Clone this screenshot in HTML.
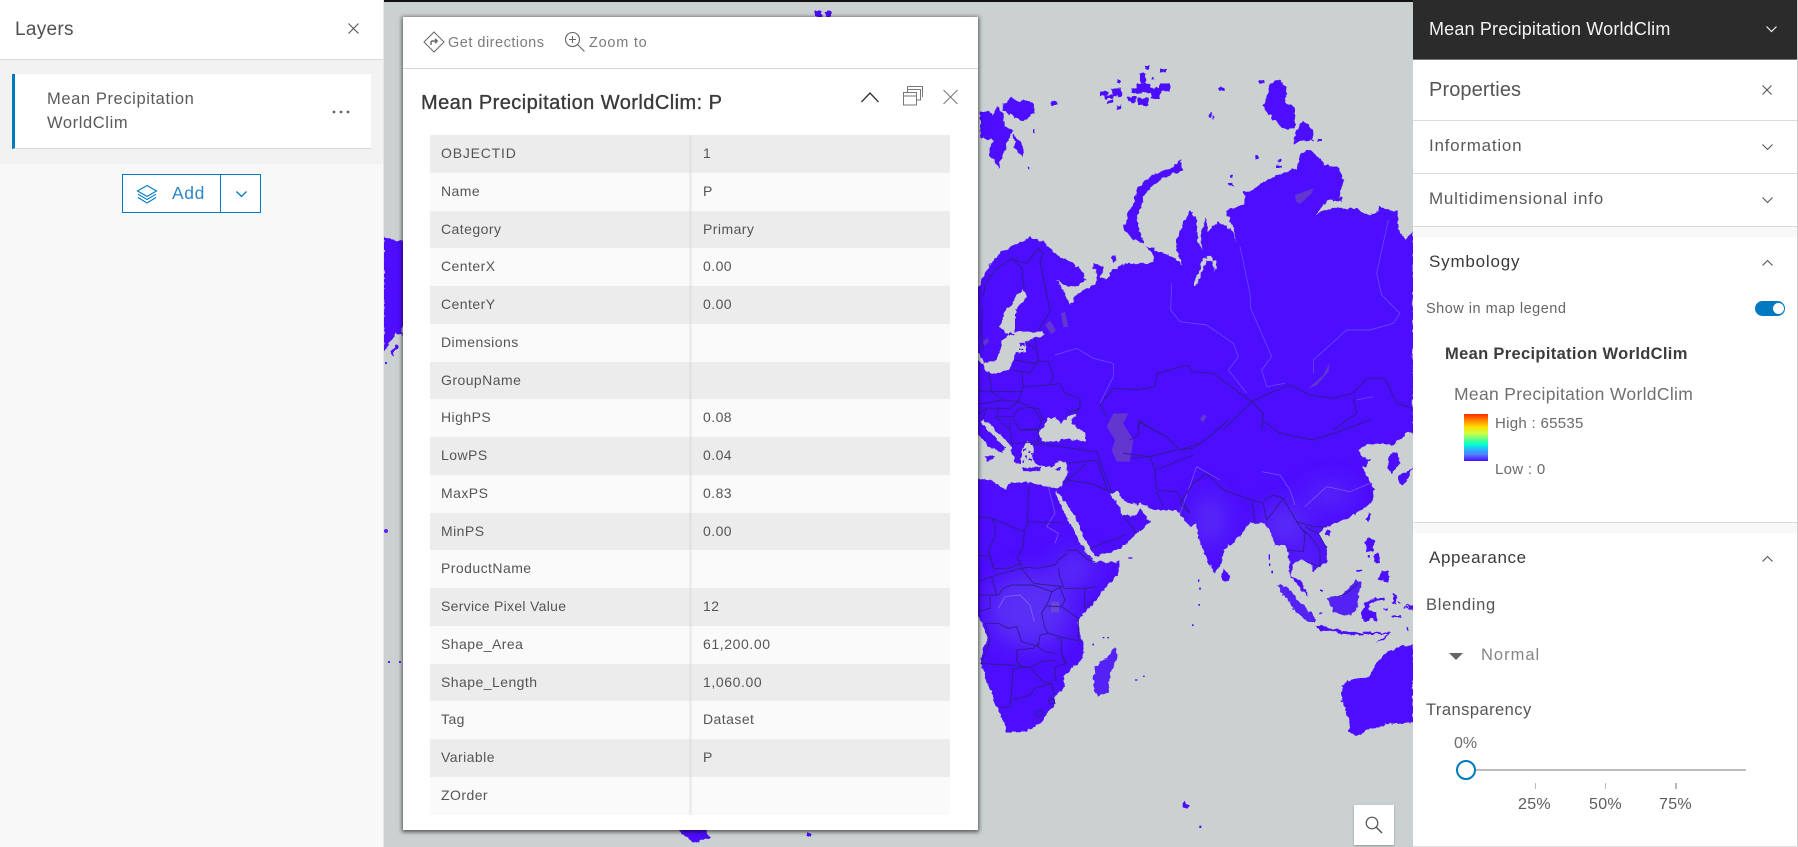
<!DOCTYPE html>
<html lang="en">
<head>
<meta charset="utf-8">
<title>Mean Precipitation WorldClim</title>
<style>
html,body{margin:0;padding:0;width:1798px;height:847px;overflow:hidden;background:#fff;font-family:"Liberation Sans",sans-serif;color:#4c4c4c}
div,span,svg{position:absolute;display:block}
.t{white-space:nowrap;line-height:20px;height:20px}
.row{left:0;width:520px;height:37.78px;position:relative}
.row span{top:8px;font-size:14px;line-height:20px;white-space:nowrap;letter-spacing:.45px;color:#555}
.row .l{left:11px}.row .v{left:273px}
.row i{position:absolute;left:259px;width:3px;top:0;bottom:0}
.o{background:#ececec}.o i{background:#e3e3e3}
.e{background:#fafafa}.e i{background:#ededed}
</style>
</head>
<body>
<!-- MAP -->
<div style="left:384px;top:0;width:1029px;height:847px;background:#cbd1d1"></div>
<svg width="1798" height="847" viewBox="0 0 1798 847" style="left:0;top:0">
<defs>
<clipPath id="mapc"><rect x="384" y="2" width="1029" height="845"/></clipPath>
<polygon id="z7land" points="-100,-5 1300,-5 1299,35 1285,35 1240,75 1210,70 1170,72 1135,90 1150,110 1172,120 1150,145 1175,195 1185,210 1170,250 1130,280 1100,295 1060,310 1040,320 1015,340 1040,385 1042,420 1000,455 990,430 965,420 940,430 935,470 960,480 985,530 955,500 930,465 925,400 915,375 885,375 870,330 855,310 810,310 770,360 730,390 725,430 705,462 680,420 655,350 650,310 630,318 605,290 590,270 520,270 480,250 470,255 430,240 410,210 390,220 410,250 430,285 470,285 480,265 510,305 470,340 435,375 400,395 345,408 315,360 290,300 245,230 228,212 225,220 265,300 295,360 340,425 420,425 415,460 380,500 330,560 295,600 300,640 310,670 310,715 250,770 255,800 225,830 225,850 180,910 135,935 85,940 70,900 40,840 3,730 7,695 20,660 20,640 -5,590 -100,590"/>
<clipPath id="landc"><use href="#z7land" transform="translate(980,420) scale(.33333)"/></clipPath>
<filter id="bl" x="-50%" y="-50%" width="200%" height="200%"><feGaussianBlur stdDeviation="12"/></filter>
<filter id="rough" filterUnits="userSpaceOnUse" x="384" y="0" width="1029" height="847">
<feTurbulence type="fractalNoise" baseFrequency=".2" numOctaves="2" seed="4" result="n"/>
<feDisplacementMap in="SourceGraphic" in2="n" scale="5" xChannelSelector="R" yChannelSelector="G"/>
</filter>
</defs>
<g clip-path="url(#mapc)">
<g filter="url(#rough)">
<!-- strip left of the popup and tiny fragments -->
<g fill="#4e0cfe">
<path d="M384 237L390 238L396 241L401 240L403 244L408 244L408 315L403 325L402 335L396 333L392 340L384 352Z"/>
<path d="M390 352L395 345L398 347L392 356Z"/>
<path d="M678 828L705 828L710 838L700 840L697 843L686 838Z"/>
<rect x="808" y="833" width="3" height="4"/>
<path d="M815 11L822 11L822 17L815 17ZM826 11L831 11L831 17L826 17Z"/>
</g>

<!-- north Eurasia, zoom-6 coordinates -->
<g transform="translate(980,0) scale(.33333)" fill="#4e0cfe">
<polygon points="0,860 10,830 30,790 60,760 90,740 150,712 190,725 210,745 240,770 280,790 310,815 315,840 290,860 250,855 230,840 250,870 270,915 285,890 310,870 345,855 352,825 338,790 370,800 362,835 385,835 395,810 440,790 505,790 520,785 520,770 500,740 540,755 580,770 610,797 590,755 590,715 610,670 630,630 650,655 652,715 668,760 660,810 640,855 650,855 670,805 680,780 700,785 705,815 708,785 690,770 665,775 665,700 678,650 684,695 715,665 760,695 768,730 760,680 735,630 790,615 795,590 790,575 815,570 860,540 920,515 950,505 960,465 990,450 1020,475 1030,495 1075,500 1090,540 1080,590 1045,600 1010,640 1060,625 1130,625 1165,645 1190,640 1195,620 1250,635 1258,700 1280,720 1299,690 1300,1300 -100,1300 -100,860"/>
<polygon points="0,335 25,330 40,345 50,320 70,340 75,380 100,390 85,420 75,450 55,505 45,480 25,465 30,440 40,420 5,415 0,390"/>
<polygon points="100,400 130,440 125,470 105,440"/>
<polygon points="70,310 95,290 110,305 130,300 160,310 165,335 130,365 90,345 70,330"/>
<polygon points="600,480 610,510 570,525 530,545 490,590 470,660 490,730 455,715 430,690 440,650 460,610 475,560 520,525 570,505"/>
<polygon points="870,250 900,240 920,270 915,310 945,320 945,385 910,385 880,360 850,320 860,290"/>
<polygon points="960,370 975,365 1000,390 1000,420 955,425 940,435 945,405"/>
<polygon points="392,770 405,765 410,780 398,787"/>
<rect x="360" y="275" width="25" height="12"/><rect x="375" y="285" width="25" height="12"/><rect x="395" y="265" width="30" height="25"/><rect x="385" y="300" width="12" height="10"/><rect x="410" y="315" width="12" height="12"/><rect x="455" y="265" width="30" height="15"/><rect x="480" y="220" width="18" height="30"/><rect x="470" y="250" width="40" height="30"/><rect x="440" y="290" width="30" height="15"/><rect x="475" y="295" width="30" height="20"/><rect x="510" y="265" width="30" height="30"/><rect x="540" y="250" width="30" height="25"/><rect x="495" y="195" width="15" height="12"/><rect x="540" y="207" width="18" height="10"/><rect x="412" y="240" width="8" height="12"/><rect x="515" y="230" width="8" height="10"/><rect x="458" y="290" width="8" height="15"/><rect x="215" y="305" width="15" height="10"/><rect x="716" y="262" width="18" height="12"/><rect x="838" y="241" width="16" height="10"/><rect x="888" y="496" width="18" height="8"/><rect x="895" y="478" width="8" height="12"/><rect x="745" y="548" width="12" height="10"/><rect x="752" y="526" width="8" height="8"/><rect x="826" y="465" width="10" height="12"/><rect x="1012" y="416" width="14" height="10"/><rect x="1060" y="592" width="25" height="12"/><rect x="688" y="340" width="6" height="10"/><rect x="697" y="350" width="6" height="6"/><rect x="157" y="385" width="6" height="16"/><rect x="142" y="497" width="6" height="12"/>
</g>

<!-- south Asia + Africa, zoom-7 coordinates -->
<g transform="translate(980,420) scale(.33333)" fill="#4e0cfe">
<use href="#z7land"/>
<polygon fill="#5522f6" points="405,682 412,715 390,760 385,815 355,830 338,800 345,740 385,710"/>
<polygon points="730,445 750,470 745,485 730,482 727,460"/>
<polygon fill="#5522f6" points="892,492 920,500 960,545 1005,590 1005,608 975,600 945,570 915,530"/>
<polygon points="1005,615 1080,630 1150,640 1150,648 1080,640 1010,628"/>
<polygon points="1150,635 1230,638 1232,642 1150,642"/>
<polygon points="1188,668 1230,640 1212,660"/>
<polygon fill="#5522f6" points="1040,535 1085,525 1115,495 1130,475 1145,490 1135,525 1130,570 1100,590 1060,575"/>
<polygon points="1155,545 1210,530 1210,540 1168,550 1165,570 1185,575 1190,605 1175,595 1160,605 1145,600 1148,570"/>
<polygon points="1155,365 1170,350 1183,360 1178,395 1160,395"/>
<polygon points="1205,450 1225,455 1225,485 1195,480"/>
<polygon points="1165,275 1175,280 1168,305 1158,300"/>
<polygon points="1040,325 1055,335 1045,350 1035,345"/>
<polygon points="1225,110 1250,95 1260,130 1235,160 1225,150"/>
<polygon points="1299,140 1290,165 1270,195 1255,185 1260,165 1285,155"/>
<polygon points="1300,675 1265,680 1215,700 1185,735 1170,770 1120,775 1088,795 1085,840 1110,905 1105,935 1130,950 1170,925 1225,912 1300,908"/>
<polygon points="1280,553 1300,558 1300,572 1285,568"/>
<polygon points="1180,405 1195,400 1200,425 1185,430"/>
<polygon points="1240,520 1250,525 1250,555 1238,550"/>
<rect x="1210" y="565" width="12" height="5"/><rect x="1240" y="585" width="24" height="6"/><rect x="1280" y="620" width="6" height="12"/><rect x="1205" y="532" width="10" height="8"/><rect x="1165" y="405" width="6" height="6"/><rect x="1130" y="450" width="12" height="5"/><rect x="1020" y="510" width="6" height="6"/><rect x="1272" y="560" width="9" height="5"/><rect x="1255" y="545" width="6" height="5"/>
<rect x="1018" y="578" width="10" height="5"/><rect x="935" y="565" width="5" height="5"/>
</g>

<!-- seas, zoom-9 coordinates -->
<g transform="translate(895,200) scale(.33333)" fill="#cbd1d1">
<polygon points="380,268 400,285 360,330 360,395 440,395 450,405 420,415 390,425 395,455 360,460 355,490 340,510 290,520 270,510 265,490 300,485 320,440 320,420 340,405 315,380 325,340 345,320 360,295"/>
<polygon points="245,458 255,460 268,490 252,490 245,480"/>
<polygon points="430,700 445,680 460,650 480,655 495,670 520,650 545,640 530,665 545,680 575,705 570,725 520,715 480,725 440,725"/>
<polygon points="240,705 250,705 278,735 305,750 322,760 330,745 320,730 295,710 275,690 262,672 262,660 278,665 300,690 325,712 345,735 350,765 365,790 378,790 378,750 395,728 415,735 410,775 430,797 470,802 490,785 515,788 515,825 500,858 470,862 440,855 395,848 345,845 330,868 310,855 290,840 240,835"/>
<g fill="#4e0cfe">
<polygon points="265,770 285,768 300,772 280,782"/>
<polygon points="380,805 435,803 435,812 385,812"/>
<polygon points="478,808 497,800 495,812"/>
<rect x="385" y="745" width="7" height="7"/><rect x="398" y="752" width="7" height="7"/><rect x="390" y="768" width="7" height="7"/><rect x="402" y="775" width="6" height="6"/><rect x="382" y="782" width="5" height="5"/><rect x="408" y="760" width="4" height="5"/>
<rect x="362" y="772" width="6" height="6"/><rect x="375" y="430" width="14" height="8"/><rect x="340" y="400" width="18" height="6"/>
<rect x="372" y="445" width="10" height="5"/>
</g>
</g>
</g>

<!-- unfiltered tiny dots -->
<g fill="#5a20f5">
<circle cx="386" cy="531" r="2"/>
<rect x="388" y="661" width="2" height="2"/><rect x="399" y="661" width="2" height="2"/>
<rect x="385" y="362" width="2" height="2"/>
</g>
<g transform="translate(980,420) scale(.33333)" fill="#4e0cfe">
<polygon points="608,1150 614,1142 618,1152 630,1156 622,1166 608,1162"/>
<rect x="658" y="1217" width="6" height="7"/>
<rect x="465" y="778" width="7" height="4"/><rect x="489" y="767" width="5" height="4"/>
<rect x="654" y="478" width="4" height="8"/><rect x="658" y="502" width="4" height="8"/><rect x="655" y="552" width="5" height="5"/><rect x="636" y="613" width="5" height="5"/>
<rect x="866" y="403" width="4" height="16"/><rect x="867" y="430" width="4" height="8"/><rect x="874" y="452" width="5" height="8"/>
<rect x="368" y="651" width="5" height="4"/><rect x="382" y="651" width="5" height="4"/><rect x="337" y="671" width="5" height="5"/>
<rect x="445" y="412" width="12" height="4"/>
</g>

<!-- soft lighter shading, clipped to land -->
<g clip-path="url(#landc)">
<g opacity=".75" filter="url(#bl)" fill="#5e3af2">
<ellipse cx="1030" cy="610" rx="42" ry="38"/>
<ellipse cx="1075" cy="568" rx="20" ry="16"/>
<ellipse cx="1285" cy="525" rx="22" ry="20"/>
<ellipse cx="1210" cy="520" rx="14" ry="26"/>
<ellipse cx="1330" cy="495" rx="24" ry="10"/>
<ellipse cx="1310" cy="560" rx="10" ry="14"/>
</g>
</g>

<!-- lakes -->
<g transform="translate(980,0) scale(.33333)" fill="#6236cf">
<polygon points="945,585 1000,565 995,580 960,612 948,605"/>
<polygon points="985,1165 1030,1125 1050,1087 1045,1115 1010,1155"/>
<polygon points="660,1255 672,1243 680,1250 668,1268"/>
</g>
<g transform="translate(980,420) scale(.33333)" fill="#6236cf">
<polygon points="380,20 400,-20 445,-20 430,10 460,60 450,125 410,125 395,90 405,60"/>
</g>
<g transform="translate(895,200) scale(.33333)" fill="#6236cf">
<polygon points="450,375 465,362 483,390 470,403"/>
<polygon points="498,340 510,335 520,380 505,382"/>
<polygon points="263,425 278,414 282,425 268,437"/>
</g>
<g transform="translate(895,480) scale(.33333)" fill="#6a46d8">
<rect x="468" y="365" width="24" height="32"/>
</g>

<!-- rivers -->
<g transform="translate(980,0) scale(.33333)" fill="none" stroke="#7255f2" stroke-width="2">
<path d="M575,850L572,930L600,965L680,975L760,1030L775,1070L745,1110L800,1180"/>
<path d="M780,740L810,880L812,925L875,1070L845,1110L860,1160L915,1150"/>
<path d="M1225,660L1190,820L1205,885L1260,940L1240,970L1170,990L1100,990L1000,1080L1000,1120"/>
<path d="M225,1065L290,1045L340,1075L400,1090L400,1130L360,1210"/>
<path d="M1130,1200L1180,1190"/>
</g>
<g transform="translate(980,420) scale(.33333)" fill="none" stroke="#7a60f2" stroke-width="2">
<path d="M205,200L225,280L200,320L235,340L225,370"/>
<path d="M845,155L900,165L930,210L945,255"/>
<path d="M975,260L1040,200L1110,215L1170,190"/>
<path d="M600,280L650,140L720,180"/>
</g>
<g transform="translate(895,480) scale(.33333)" fill="none" stroke="#8a72f0" stroke-width="2">
<path d="M310,385L330,350L375,345L405,375L418,425"/>
</g>

<!-- borders -->
<g transform="translate(980,0) scale(.33333)" fill="none" stroke="#2f1c90" stroke-width="2.8">
<path d="M380,1190L400,1165L470,1170L525,1160L530,1120L625,1095L635,1115L700,1120L780,1180L815,1205L880,1175L930,1155L990,1185L1060,1195L1120,1180L1160,1135L1215,1135L1250,1210L1299,1225"/>
<path d="M815,1205L850,1240L845,1290"/>
<path d="M380,1190L360,1215L380,1250"/>
<path d="M730,1290L780,1240L815,1205"/>
<path d="M1060,1290L1130,1240L1120,1190"/>
<path d="M475,1290L480,1262L520,1290"/>
</g>
<g transform="translate(895,200) scale(.33333)" fill="none" stroke="#2f1c90" stroke-width="2.8">
<path d="M265,290L270,255L300,210L350,175L380,205L388,268"/>
<path d="M350,175L370,185L395,190L430,145L445,160L435,185L455,280L465,335L430,390"/>
<path d="M262,320L260,400L265,450"/>
<path d="M420,415L430,480"/>
<path d="M390,425L420,445M360,480L415,490L430,483L460,485L475,530L465,550"/>
<path d="M282,520L290,575L380,575L385,560L380,515L355,510"/>
<path d="M380,515L405,518L430,483"/>
<path d="M385,560L465,555L495,550L510,580L555,595L555,625L515,640"/>
<path d="M385,560L370,605L415,625L430,625L445,660"/>
<path d="M250,570L262,575L290,575L325,600L270,610L250,610"/>
<path d="M270,610L325,600L370,605L345,625L310,625L275,625"/>
<path d="M310,625L305,650L355,650L370,625"/>
<path d="M370,625L415,622L440,665L430,685L375,690L355,655"/>
<path d="M375,690L430,690L430,725L375,730"/>
<path d="M300,650L345,690L350,730L375,730M345,660L345,690"/>
<path d="M415,735L440,730"/>
<path d="M250,640L275,625L262,660"/>
<path d="M555,625L540,640"/>
</g>
<g transform="translate(980,420) scale(.33333)" fill="none" stroke="#2f1c90" stroke-width="2.8">
<path d="M262,130L350,120L385,215"/>
<path d="M250,190L262,180L320,130M262,180L330,190L390,215"/>
<path d="M350,90L360,125L395,215"/>
<path d="M175,70L345,95"/>
<path d="M430,100L510,110L525,150L530,210L590,215L630,280"/>
<path d="M530,215L550,260"/>
<path d="M630,280L600,250L640,190L680,160"/>
<path d="M680,160L730,210L815,240"/>
<path d="M815,240L825,305M860,300L850,250L815,240"/>
<path d="M860,300L910,235L880,225L850,240"/>
<path d="M910,235L950,305L1000,320L1040,320"/>
<path d="M950,305L975,340L970,395L925,390"/>
<path d="M970,330L1000,360L1020,390L1020,440L990,430"/>
<path d="M975,320L1015,340L1040,385"/>
<path d="M450,60L475,45L475,5"/>
<path d="M475,5L560,50L600,90L640,85L700,40L745,0"/>
<path d="M845,0L900,40L1000,60L1090,30L1170,0"/>
<path d="M450,115L510,110L590,90M600,90L660,70L700,40"/>
<path d="M510,110L525,150L590,125L640,105"/>
<path d="M430,285L470,340M330,385L435,345"/>
<path d="M1075,530L1100,520L1135,490"/>
</g>
<g transform="translate(895,480) scale(.33333)" fill="none" stroke="#2f1c90" stroke-width="2.8">
<path d="M400,20L398,125L500,128"/>
<path d="M400,125L385,155L290,115L250,110"/>
<path d="M388,152L385,200L368,230L380,265"/>
<path d="M300,130L300,170L280,210L295,260"/>
<path d="M295,265L340,265L380,250"/>
<path d="M380,265L395,262L430,265L480,255L490,240L515,220"/>
<path d="M290,290L340,275L380,265L415,310L505,320L495,290L490,265"/>
<path d="M515,212L545,210L580,240L600,245"/>
<path d="M505,325L535,325L570,325L600,320"/>
<path d="M325,325L350,315L415,315L470,335L460,365L440,400L450,445L460,460L435,465L430,500L380,485L365,440L340,445L310,430L270,430"/>
<path d="M455,378L500,380L550,415L550,480"/>
<path d="M470,335L495,322L510,360L500,380"/>
<path d="M570,325L568,385L600,355"/>
<path d="M460,460L495,470L560,485"/>
<path d="M270,430L285,480L275,510L258,550L360,556L405,562L440,545L480,540"/>
<path d="M365,510L365,545L385,560"/>
<path d="M365,510L415,505L430,490M430,500L450,515L480,520"/>
<path d="M500,520L515,550L480,560L483,605"/>
<path d="M470,610L480,650"/>
<path d="M355,565L345,680L310,685"/>
<path d="M355,565L405,562L445,605L470,610L420,625L405,645L350,660"/>
<path d="M420,700L435,688L445,700L430,712Z"/>
<path d="M460,660L475,655L480,670L465,672Z"/>
<path d="M485,475L498,475L500,520L510,550"/>
<path d="M250,395L285,385L285,345L310,345L325,325"/>
<path d="M250,345L285,345"/>
<path d="M250,305L290,290L305,345"/>
<path d="M250,225L285,230L295,265"/>
<path d="M250,110L290,115L300,130"/>
</g>
</g>
</svg>

<!-- top black bar -->
<div style="left:384px;top:0;width:1029px;height:2px;background:#111"></div>

<!-- LEFT PANEL -->
<div style="left:0;top:0;width:383px;height:847px;background:#f8f8f8;border-right:1px solid #e6e6e6"></div>
<div style="left:0;top:0;width:383px;height:59px;background:#fff;border-bottom:1px solid #dcdcdc"></div>
<div style="left:0;top:60px;width:383px;height:104px;background:#f2f2f2"></div>
<div class="t" style="left:15px;top:20px;font-size:19px;letter-spacing:.3px;color:#505050">Layers</div>
<svg style="left:348px;top:23px" width="11" height="11" viewBox="0 0 11 11"><path d="M.5.5L10.5 10.5M10.5.5L.5 10.5" stroke="#555" stroke-width="1.1" fill="none"/></svg>
<div style="left:12px;top:74px;width:356px;height:74px;background:#fff;border-left:3px solid #0079c1;border-bottom:1px solid #d8d8d8"></div>
<div class="t" style="left:47px;top:89px;font-size:16.5px;letter-spacing:.6px;color:#5a5a5a">Mean Precipitation</div>
<div class="t" style="left:47px;top:113px;font-size:16.5px;letter-spacing:.6px;color:#5a5a5a">WorldClim</div>
<svg style="left:330px;top:108px" width="22" height="8"><circle cx="4" cy="4" r="1.4" fill="#666"/><circle cx="11" cy="4" r="1.4" fill="#666"/><circle cx="18" cy="4" r="1.4" fill="#666"/></svg>
<div style="left:122px;top:174px;width:137px;height:37px;background:#fff;border:1px solid #0079c1"></div>
<div style="left:220px;top:174px;width:1px;height:39px;background:#0079c1"></div>
<svg style="left:136px;top:184px" width="22" height="21" viewBox="0 0 22 21" fill="none" stroke="#0079c1" stroke-width="1.1"><path d="M11 1.5L20.5 7L11 12.5L1.5 7Z"/><path d="M2 10.2L11 15.5L20 10.2"/><path d="M2 13.5L11 19L20 13.5"/></svg>
<div class="t" style="left:172px;top:183px;font-size:17.5px;letter-spacing:.6px;color:#2f86c5">Add</div>
<svg style="left:235px;top:190px" width="13" height="9" viewBox="0 0 13 9"><path d="M1.5 1.5L6.5 6.5L11.5 1.5" stroke="#0079c1" stroke-width="1.3" fill="none"/></svg>

<!-- POPUP -->
<div style="left:403px;top:17px;width:575px;height:813px;background:#fff;box-shadow:0 1px 4px 1px rgba(0,0,0,.6)"></div>
<div style="left:403px;top:68px;width:575px;height:1px;background:#d4d4d4"></div>
<svg style="left:423px;top:31px" width="22" height="22" viewBox="0 0 22 22" fill="none" stroke="#666" stroke-width="1"><path d="M11 1L21 11L11 21L1 11Z"/><path d="M8 14V11.5Q8 10 10 10H14M12 7.8L14.2 10L12 12.2" stroke-width="1.4"/></svg>
<div class="t" style="left:448px;top:33px;font-size:14.5px;letter-spacing:.5px;color:#7c7c7c">Get directions</div>
<svg style="left:564px;top:31px" width="22" height="22" viewBox="0 0 22 22" fill="none" stroke="#666" stroke-width="1.1"><circle cx="8.5" cy="8.5" r="7"/><path d="M13.5 13.5L20.5 20.5"/><path d="M8.5 5V12M5 8.5H12"/></svg>
<div class="t" style="left:589px;top:33px;font-size:14.5px;letter-spacing:.75px;color:#7c7c7c">Zoom to</div>
<div class="t" style="left:421px;top:93px;font-size:20px;letter-spacing:.45px;color:#3a3a3a;-webkit-text-stroke:.35px #3a3a3a">Mean Precipitation WorldClim: P</div>
<svg style="left:860px;top:91px" width="20" height="12" viewBox="0 0 20 12"><path d="M1.5 11L10 2L18.5 11" stroke="#333" stroke-width="1.3" fill="none"/></svg>
<svg style="left:902px;top:85px" width="22" height="21" viewBox="0 0 22 21" fill="none" stroke="#777" stroke-width="1"><rect x="1.5" y="7.5" width="13" height="12.5"/><path d="M1.5 11H14.5"/><path d="M5.5 7.5V4.5H18.5V15H14.5M5.5 4.5V1.5H20.5V12"/></svg>
<svg style="left:942px;top:89px" width="17" height="16" viewBox="0 0 17 16"><path d="M1.5 1L15.5 15M15.5 1L1.5 15" stroke="#777" stroke-width="1" fill="none"/></svg>

<div style="left:430px;top:135px;width:520px;height:680px">
<div class="row o"><i></i><span class="l" style="letter-spacing:.8px">OBJECTID</span><span class="v">1</span></div>
<div class="row e"><i></i><span class="l">Name</span><span class="v">P</span></div>
<div class="row o"><i></i><span class="l">Category</span><span class="v">Primary</span></div>
<div class="row e"><i></i><span class="l">CenterX</span><span class="v">0.00</span></div>
<div class="row o"><i></i><span class="l">CenterY</span><span class="v">0.00</span></div>
<div class="row e"><i></i><span class="l">Dimensions</span></div>
<div class="row o"><i></i><span class="l">GroupName</span></div>
<div class="row e"><i></i><span class="l">HighPS</span><span class="v">0.08</span></div>
<div class="row o"><i></i><span class="l">LowPS</span><span class="v">0.04</span></div>
<div class="row e"><i></i><span class="l">MaxPS</span><span class="v">0.83</span></div>
<div class="row o"><i></i><span class="l">MinPS</span><span class="v">0.00</span></div>
<div class="row e"><i></i><span class="l">ProductName</span></div>
<div class="row o"><i></i><span class="l" style="letter-spacing:.3px">Service Pixel Value</span><span class="v">12</span></div>
<div class="row e"><i></i><span class="l">Shape_Area</span><span class="v" style="letter-spacing:.6px">61,200.00</span></div>
<div class="row o"><i></i><span class="l">Shape_Length</span><span class="v" style="letter-spacing:.6px">1,060.00</span></div>
<div class="row e"><i></i><span class="l">Tag</span><span class="v">Dataset</span></div>
<div class="row o"><i></i><span class="l">Variable</span><span class="v">P</span></div>
<div class="row e"><i></i><span class="l">ZOrder</span></div>
</div>

<!-- search button -->
<div style="left:1354px;top:805px;width:40px;height:40px;background:#fff;box-shadow:0 1px 2px rgba(0,0,0,.3)"></div>
<svg style="left:1365px;top:816px" width="18" height="18" viewBox="0 0 18 18" fill="none" stroke="#555"><circle cx="7" cy="7" r="5.8" stroke-width="1.2"/><path d="M11 11L17 17" stroke-width="1.5"/></svg>

<!-- RIGHT PANEL -->
<div style="left:1413px;top:0;width:385px;height:847px;background:#fff"></div>
<div style="left:1797px;top:0;width:1px;height:847px;background:#ccc"></div>
<div style="left:1413px;top:846px;width:385px;height:1px;background:#ddd"></div>
<div style="left:1413px;top:0;width:384px;height:59px;background:#2b2b2b;border-bottom:1px solid #777"></div>
<div class="t" style="left:1429px;top:19px;font-size:18px;letter-spacing:.17px;color:#f2f2f2">Mean Precipitation WorldClim</div>
<svg style="left:1765px;top:25px" width="13" height="9" viewBox="0 0 13 9"><path d="M1.5 1.5L6.5 6.5L11.5 1.5" stroke="#eee" stroke-width="1.2" fill="none"/></svg>
<div class="t" style="left:1429px;top:80px;font-size:20px;color:#555;letter-spacing:.1px">Properties</div>
<svg style="left:1762px;top:85px" width="10" height="10" viewBox="0 0 10 10"><path d="M.5.5L9.5 9.5M9.5.5L.5 9.5" stroke="#555" stroke-width="1.1" fill="none"/></svg>
<div style="left:1413px;top:120px;width:384px;height:1px;background:#dcdcdc"></div>
<div class="t" style="left:1429px;top:136px;font-size:17px;letter-spacing:.75px;color:#5a5a5a">Information</div>
<svg style="left:1761px;top:143px" width="13" height="9" viewBox="0 0 13 9"><path d="M1.5 1.5L6.5 6.5L11.5 1.5" stroke="#555" stroke-width="1.1" fill="none"/></svg>
<div style="left:1413px;top:173px;width:384px;height:1px;background:#dcdcdc"></div>
<div class="t" style="left:1429px;top:189px;font-size:17px;letter-spacing:.77px;color:#5a5a5a">Multidimensional info</div>
<svg style="left:1761px;top:196px" width="13" height="9" viewBox="0 0 13 9"><path d="M1.5 1.5L6.5 6.5L11.5 1.5" stroke="#555" stroke-width="1.1" fill="none"/></svg>
<div style="left:1413px;top:226px;width:384px;height:11px;background:#f8f8f8;border-top:1px solid #dcdcdc;box-sizing:border-box"></div>
<div class="t" style="left:1429px;top:252px;font-size:17px;letter-spacing:.8px;color:#3a3a3a">Symbology</div>
<svg style="left:1761px;top:258px" width="13" height="9" viewBox="0 0 13 9"><path d="M1.5 7.5L6.5 2.5L11.5 7.5" stroke="#555" stroke-width="1.1" fill="none"/></svg>
<div class="t" style="left:1426px;top:299px;font-size:14.5px;letter-spacing:.5px;color:#666">Show in map legend</div>
<div style="left:1755px;top:301px;width:30px;height:15px;border-radius:8px;background:#0079c1"></div>
<div style="left:1773px;top:303px;width:11px;height:11px;border-radius:50%;background:#fff"></div>
<div class="t" style="left:1445px;top:344px;font-size:16.5px;font-weight:bold;letter-spacing:.33px;color:#3c3c3c">Mean Precipitation WorldClim</div>
<div class="t" style="left:1454px;top:384px;font-size:17.5px;letter-spacing:.32px;color:#707070">Mean Precipitation WorldClim</div>
<div style="left:1464px;top:414px;width:24px;height:47px;background:linear-gradient(#ff2a00 0%,#ff8a00 14%,#ffe000 28%,#c8ff4a 42%,#55ff90 55%,#00ffd0 65%,#30b0ff 76%,#5080ff 86%,#4d0cff 100%)"></div>
<div class="t" style="left:1495px;top:414px;font-size:15px;letter-spacing:.3px;color:#6a6a6a">High : 65535</div>
<div class="t" style="left:1495px;top:460px;font-size:15px;letter-spacing:.3px;color:#6a6a6a">Low : 0</div>
<div style="left:1413px;top:522px;width:384px;height:11px;background:#f8f8f8;border-top:1px solid #dcdcdc;box-sizing:border-box"></div>
<div class="t" style="left:1429px;top:548px;font-size:17px;letter-spacing:.6px;color:#3a3a3a">Appearance</div>
<svg style="left:1761px;top:554px" width="13" height="9" viewBox="0 0 13 9"><path d="M1.5 7.5L6.5 2.5L11.5 7.5" stroke="#555" stroke-width="1.1" fill="none"/></svg>
<div class="t" style="left:1426px;top:595px;font-size:16.5px;letter-spacing:.7px;color:#555">Blending</div>
<svg style="left:1449px;top:653px" width="14" height="7" viewBox="0 0 14 7"><path d="M0 0H14L7 7Z" fill="#666"/></svg>
<div class="t" style="left:1481px;top:645px;font-size:16.5px;letter-spacing:1px;color:#858585">Normal</div>
<div class="t" style="left:1426px;top:700px;font-size:16.5px;letter-spacing:.45px;color:#555">Transparency</div>
<div class="t" style="left:1454px;top:734px;font-size:16px;color:#6a6a6a">0%</div>
<div style="left:1475px;top:769px;width:271px;height:2px;background:#bdbdbd"></div>
<div style="left:1456px;top:760px;width:16px;height:16px;border-radius:50%;background:#fff;border:2px solid #0079c1"></div>
<div style="left:1535px;top:783px;width:1px;height:6px;background:#bbb"></div>
<div style="left:1605px;top:783px;width:1px;height:6px;background:#bbb"></div>
<div style="left:1675px;top:783px;width:2px;height:6px;background:#bbb"></div>
<div class="t" style="left:1518px;top:795px;font-size:16px;letter-spacing:.3px;color:#5c5c5c">25%</div>
<div class="t" style="left:1589px;top:795px;font-size:16px;letter-spacing:.3px;color:#5c5c5c">50%</div>
<div class="t" style="left:1659px;top:795px;font-size:16px;letter-spacing:.3px;color:#5c5c5c">75%</div>
</body>
</html>
